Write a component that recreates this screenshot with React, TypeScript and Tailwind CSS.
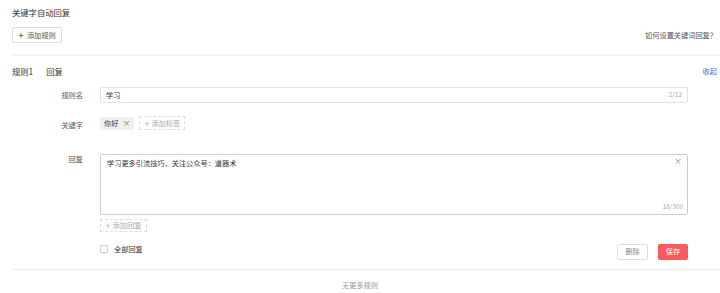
import React from "react";

const font = { fontFamily: '"Noto Sans CJK SC", "Noto Sans", sans-serif' };

const App: React.FC = () => {
  return (
    <div
      className="w-[720px] h-[293px] bg-white text-[#333] overflow-hidden"
      style={font}
    >
      {/* header */}
      <div className="pl-[12px] pr-[3px] pt-[6px]">
        <div className="text-[8.3px] leading-[12px] text-[#333]">关键字自动回复</div>
        <div className="flex justify-between items-center mt-[9px]">
          <button className="h-[16px] w-[50px] border border-[#ddd] rounded-[2px] text-[7.2px] text-[#555] flex items-center justify-center gap-[3px] bg-white">
            <span className="text-[10px] leading-none">+</span>
            添加规则
          </button>
          <span className="text-[7.2px] text-[#555]">如何设置关键词回复？</span>
        </div>
      </div>
      <div className="ml-[12px] mt-[11px] h-[2px] bg-[#f3f3f3]" />

      {/* rule */}
      <div className="pl-[12px] pr-[3px]">
        <div className="flex justify-between items-center mt-[9px] h-[12px]">
          <div className="flex items-center text-[8.3px] text-[#333]">
            <span>规则1</span>
            <span className="ml-[13px]">回复</span>
          </div>
          <span className="text-[7.2px] text-[#3a6fd8]">收起</span>
        </div>

        {/* name */}
        <div className="flex items-center mt-[10px]">
          <div className="w-[71px] text-right text-[7.2px] text-[#555]">规则名</div>
          <div className="ml-[17px] w-[588px] h-[16px] border border-[#e2e2e2] rounded-[2px] flex items-center justify-between px-[5px]">
            <span className="text-[7.2px] text-[#333]">学习</span>
            <span className="text-[6.5px] text-[#aaa]">2/12</span>
          </div>
        </div>

        {/* keyword */}
        <div className="flex items-center mt-[13px]">
          <div className="w-[71px] text-right text-[7.2px] text-[#555] pt-[4px]">关键字</div>
          <div className="ml-[17px] flex items-center gap-[5px]">
            <span className="h-[13px] px-[4px] bg-[#f0f0f0] rounded-[1px] flex items-center gap-[4px] text-[7.2px] text-[#333]">
              你好<span className="text-[8px] text-[#777] leading-none">×</span>
            </span>
            <span className="h-[14px] px-[4px] border border-dashed border-[#ddd] flex items-center gap-[2px] text-[7.2px] text-[#aaa]">
              <span className="text-[9px] leading-none">+</span>添加标签
            </span>
          </div>
        </div>

        {/* reply */}
        <div className="flex items-start mt-[23px]">
          <div className="w-[71px] text-right text-[7.2px] text-[#555] leading-[10px]">回复</div>
          <div className="ml-[17px]">
            <div className="relative w-[588px] h-[61px] border border-[#ccc] rounded-[2px]">
              <div className="absolute left-[6px] top-[3px] text-[7.2px] text-[#333]">
                学习更多引流技巧，关注公众号：道器术
              </div>
              <span className="absolute right-[5px] top-[2px] text-[8px] text-[#888] leading-none">×</span>
              <span className="absolute right-[4px] bottom-[2px] text-[6.5px] text-[#aaa]">18/300</span>
            </div>
            <div className="mt-[4px] h-[13px] w-[47px] border border-dashed border-[#ddd] flex items-center justify-center gap-[2px] text-[7.2px] text-[#aaa]">
              <span className="text-[9px] leading-none">+</span>添加回复
            </div>
          </div>
        </div>

        {/* footer row */}
        <div className="flex items-center mt-[12px] h-[16px]">
          <div className="ml-[88px] flex items-center gap-[6px] w-[517px] -mt-[5px]">
            <span className="w-[8px] h-[8px] border border-[#ccc] rounded-[1px] bg-white" />
            <span className="text-[7.2px] text-[#333]">全部回复</span>
          </div>
          <button className="w-[31px] h-[16px] border border-[#ddd] rounded-[2px] text-[7.2px] text-[#888] bg-white">
            删除
          </button>
          <button className="ml-[10px] w-[30px] h-[16px] rounded-[2px] text-[7.2px] text-white bg-[#fb5a5a]">
            保存
          </button>
        </div>
      </div>
      <div className="ml-[12px] mt-[9px] h-[1px] bg-[#ececec]" />
      <div className="text-center text-[7.2px] text-[#999] mt-[10px]">无更多规则</div>
    </div>
  );
};

export default App;
